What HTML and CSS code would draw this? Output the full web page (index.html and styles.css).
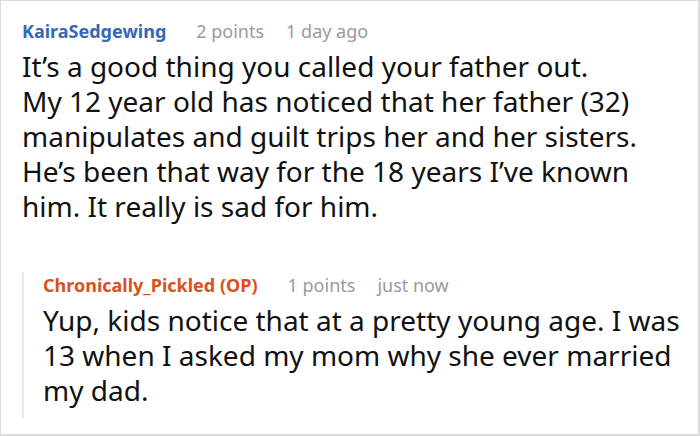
FILE: index.html
```html
<!DOCTYPE html>
<html>
<head>
<meta charset="utf-8">
<link rel="stylesheet" href="styles.css">
</head>
<body>
<div class="frame">
  <div class="comment">
    <div class="meta">
      <span class="author">KairaSedgewing</span>
      <span class="info">2 points</span>
      <span class="info">1 day ago</span>
    </div>
    <div class="text">It’s a good thing you called your father out.<br>My 12 year old has noticed that her father (32) manipulates and guilt trips her and her sisters. He’s been that way for the 18 years I’ve known him. It really is sad for him.</div>
    <div class="reply">
      <div class="meta">
        <span class="author op">Chronically_Pickled (OP)</span>
        <span class="info">1 points</span>
        <span class="info">just now</span>
      </div>
      <div class="text">Yup, kids notice that at a pretty young age. I was 13 when I asked my mom why she ever married my dad.</div>
    </div>
  </div>
</div>
</body>
</html>
```

FILE: styles.css
```css
html, body {
  margin: 0;
  padding: 0;
  background: #fff;
}
.frame {
  width: 700px;
  height: 436px;
  box-sizing: border-box;
  border: 1px solid #dcdcdc;
  border-bottom-width: 2px;
  border-right-width: 2px;
  font-family: "Noto Sans", sans-serif;
  color: #111;
  overflow: hidden;
}
.comment {
  padding: 17px 14px 0 21px;
}
.meta {
  display: flex;
  gap: 22px;
  align-items: baseline;
  font-size: 18px;
  line-height: 26px;
}
.author {
  font-weight: 700;
  color: #3567b4;
  margin-right: 8px;
}
.author.op {
  color: #d8521e;
}
.info {
  color: #9a9a9a;
}
.text {
  font-size: 28px;
  line-height: 35px;
  margin-top: 5px;
}
.reply {
  margin-top: 48px;
  border-left: 2px solid #e8e8e8;
  padding-left: 19px;
  padding-bottom: 10px;
}
```
